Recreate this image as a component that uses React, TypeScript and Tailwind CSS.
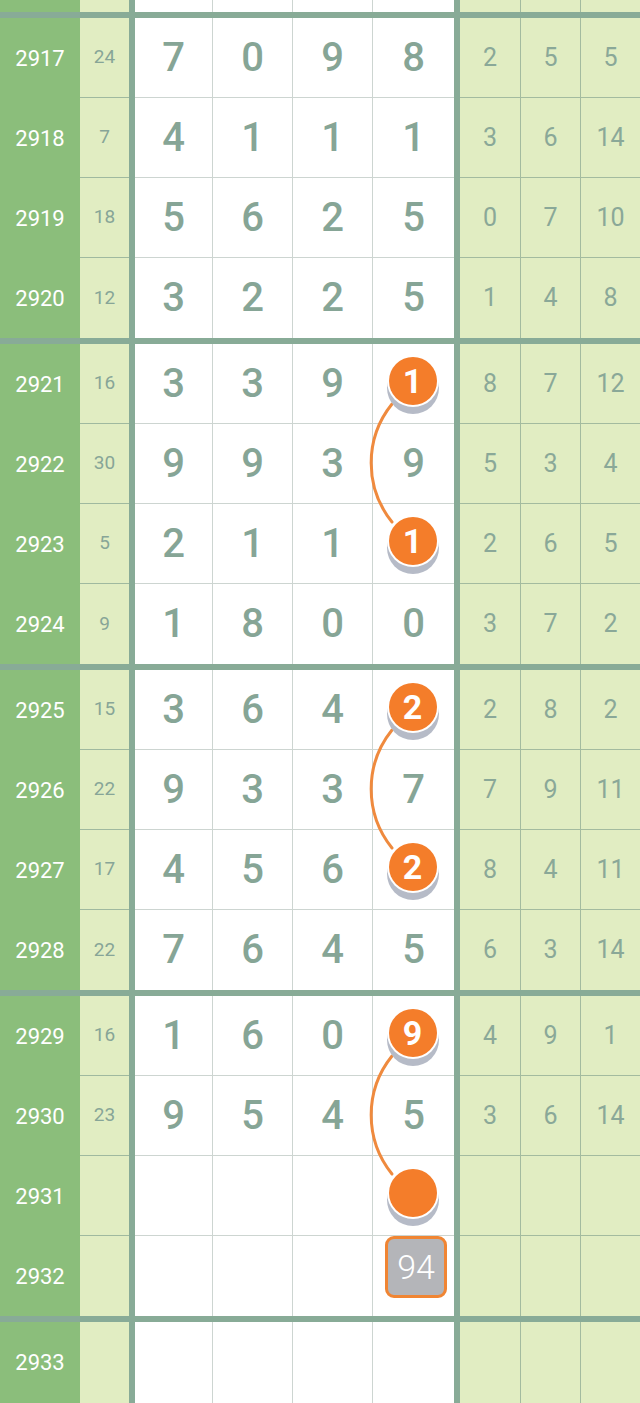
type Mark = "circle" | "dot" | "box" | null;

interface RowData {
  period: string;
  sum?: number;
  digits?: number[];
  mark?: Mark;
  right?: number[];
}

const groups: RowData[][] = [
  [
    { period: "2917", sum: 24, digits: [7, 0, 9, 8], right: [2, 5, 5] },
    { period: "2918", sum: 7, digits: [4, 1, 1, 1], right: [3, 6, 14] },
    { period: "2919", sum: 18, digits: [5, 6, 2, 5], right: [0, 7, 10] },
    { period: "2920", sum: 12, digits: [3, 2, 2, 5], right: [1, 4, 8] },
  ],
  [
    { period: "2921", sum: 16, digits: [3, 3, 9, 1], mark: "circle", right: [8, 7, 12] },
    { period: "2922", sum: 30, digits: [9, 9, 3, 9], right: [5, 3, 4] },
    { period: "2923", sum: 5, digits: [2, 1, 1, 1], mark: "circle", right: [2, 6, 5] },
    { period: "2924", sum: 9, digits: [1, 8, 0, 0], right: [3, 7, 2] },
  ],
  [
    { period: "2925", sum: 15, digits: [3, 6, 4, 2], mark: "circle", right: [2, 8, 2] },
    { period: "2926", sum: 22, digits: [9, 3, 3, 7], right: [7, 9, 11] },
    { period: "2927", sum: 17, digits: [4, 5, 6, 2], mark: "circle", right: [8, 4, 11] },
    { period: "2928", sum: 22, digits: [7, 6, 4, 5], right: [6, 3, 14] },
  ],
  [
    { period: "2929", sum: 16, digits: [1, 6, 0, 9], mark: "circle", right: [4, 9, 1] },
    { period: "2930", sum: 23, digits: [9, 5, 4, 5], right: [3, 6, 14] },
    { period: "2931", mark: "dot" },
    { period: "2932", mark: "box" },
  ],
];

const whiteWidths = ["w-[77px]", "w-[80px] border-l", "w-[80px] border-l", "w-[82px] border-l"];
const rightWidths = ["w-[60px]", "w-[60px] border-l", "w-[60px] border-l"];

function Ball({ value }: { value?: number }) {
  return (
    <div className="relative z-10 w-[52px] h-[52px] -mt-[5px] -ml-[2px]">
      <div className="absolute left-0 top-[7px] w-[52px] h-[52px] rounded-full bg-[#b6bbc7]" />
      <div className="absolute inset-0 rounded-full bg-white flex items-center justify-center">
        <div className="w-[48px] h-[48px] rounded-full bg-[#f47d2a] flex items-center justify-center text-white text-[34px] font-bold leading-none">
          {value}
        </div>
      </div>
    </div>
  );
}

function Row({ row, last, height = "h-[80px]" }: { row?: RowData; last?: boolean; height?: string }) {
  const line = last ? "" : "border-b";
  return (
    <div className={`flex ${height}`}>
      <div className="w-[80px] bg-[#8bbe7b] flex items-center justify-center text-white text-[22px]">
        {row?.period}
      </div>
      <div className={`w-[49px] bg-[#e1edc2] border-[#9fb99f] ${line} flex items-center justify-center text-[19px] text-[#87a597]`}>
        {row?.sum}
      </div>
      <div className="w-[6px] bg-[#88ab97]" />
      {whiteWidths.map((w, i) => {
        const isLast = i === 3;
        return (
          <div
            key={i}
            className={`${w} ${line} border-[#cdd5d1] bg-white flex justify-center text-[40px] font-medium text-[#86a596] ${
              isLast && row?.mark === "box" ? "items-start" : "items-center"
            }`}
          >
            {isLast && row?.mark === "circle" ? (
              <Ball value={row.digits?.[3]} />
            ) : isLast && row?.mark === "dot" ? (
              <Ball />
            ) : isLast && row?.mark === "box" ? (
              <div className="w-[62px] h-[62px] ml-[5px] rounded-[9px] border-[3px] border-[#f08533] bg-[#b4b5b9] flex items-center justify-center text-white text-[34px] font-light">
                94
              </div>
            ) : (
              row?.digits?.[i]
            )}
          </div>
        );
      })}
      <div className="w-[6px] bg-[#88ab97]" />
      {rightWidths.map((w, i) => (
        <div
          key={i}
          className={`${w} ${line} border-[#a3bb9f] bg-[#e1edc2] flex items-center justify-center text-[25px] text-[#8aa898]`}
        >
          {row?.right?.[i]}
        </div>
      ))}
    </div>
  );
}

function Arc({ y1, y2 }: { y1: number; y2: number }) {
  return (
    <path
      d={`M392 ${y1} A94 94 0 0 0 392 ${y2}`}
      fill="none"
      stroke="#ef8a3e"
      strokeWidth="3"
      strokeLinecap="round"
    />
  );
}

export default function App() {
  return (
    <div className="relative w-[640px] h-[1403px] overflow-hidden bg-white font-['Roboto',sans-serif]">
      <Row last height="h-[12px]" />
      {groups.map((g, gi) => (
        <div key={gi} className="border-t-[6px] border-[#88ab97]">
          {g.map((r, ri) => (
            <Row key={r.period} row={r} last={ri === g.length - 1} />
          ))}
        </div>
      ))}
      <div className="border-t-[6px] border-[#88ab97]">
        <Row row={{ period: "2933" }} last height="h-[81px]" />
      </div>
      <svg className="absolute left-0 top-0 pointer-events-none" width="640" height="1403">
        <Arc y1={404} y2={522} />
        <Arc y1={730} y2={848} />
        <Arc y1={1056} y2={1174} />
      </svg>
    </div>
  );
}
